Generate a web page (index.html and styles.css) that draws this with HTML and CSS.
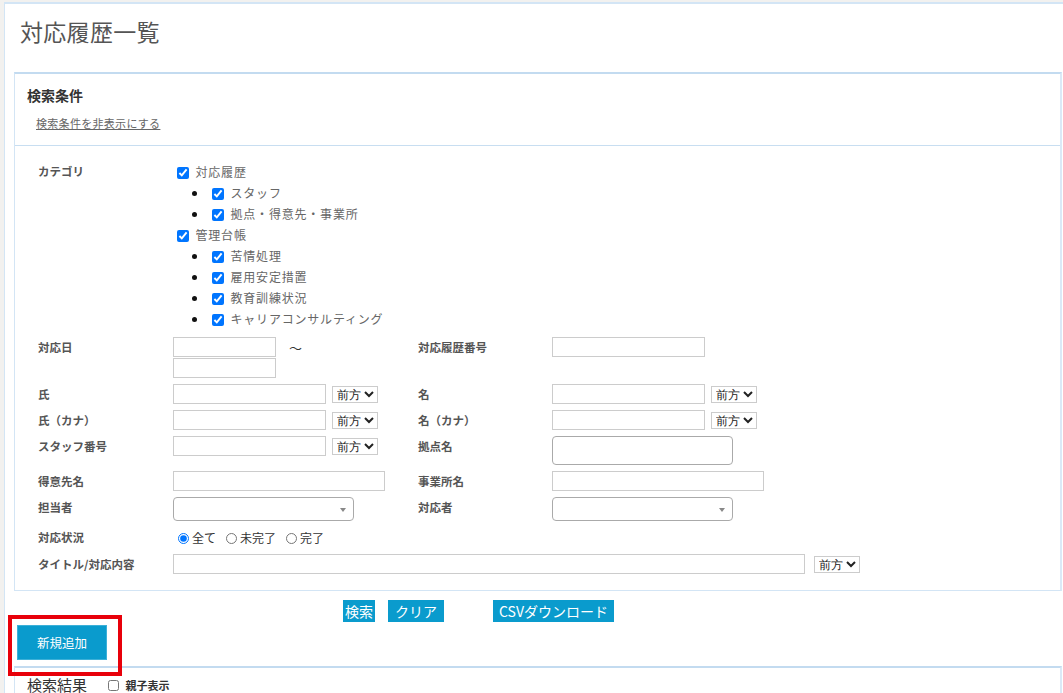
FILE: index.html
```html
<!doctype html>
<html>
  <head>
    <meta charset="utf-8">
    <title>対応履歴一覧</title>
    <link rel="stylesheet" href="styles.css">
  </head>
<body>
<div class="page">
  <h1 class="page_title">対応履歴一覧</h1>

  <!-- search conditions -->
  <div class="panel">
    <div class="panel_head">
      <h2>検索条件</h2>
      <a href="#" class="toggle_link">検索条件を非表示にする</a>
    </div>
    <div class="panel_body">
      <div class="form_grid">
        <div class="lbl">カテゴリ</div>
        <div class="span3">
          <ul class="cat_list">
            <li><label><input type="checkbox" checked> 対応履歴</label>
              <ul>
                <li><label><input type="checkbox" checked> スタッフ</label></li>
                <li><label><input type="checkbox" checked> 拠点・得意先・事業所</label></li>
              </ul>
            </li>
            <li><label><input type="checkbox" checked> 管理台帳</label>
              <ul>
                <li><label><input type="checkbox" checked> 苦情処理</label></li>
                <li><label><input type="checkbox" checked> 雇用安定措置</label></li>
                <li><label><input type="checkbox" checked> 教育訓練状況</label></li>
                <li><label><input type="checkbox" checked> キャリアコンサルティング</label></li>
              </ul>
            </li>
          </ul>
        </div>

        <div class="lbl">対応日</div>
        <div class="cell cell_date">
          <div class="cell"><input type="text" class="txt w_date"><span class="tilde">〜</span></div>
          <input type="text" class="txt w_date date2">
        </div>
        <div class="lbl">対応履歴番号</div>
        <div class="cell"><input type="text" class="txt w_mid"></div>

        <div class="lbl">氏</div>
        <div class="cell"><input type="text" class="txt w_mid"><select class="match"><option>前方</option></select></div>
        <div class="lbl">名</div>
        <div class="cell"><input type="text" class="txt w_mid"><select class="match"><option>前方</option></select></div>

        <div class="lbl">氏（カナ）</div>
        <div class="cell"><input type="text" class="txt w_mid"><select class="match"><option>前方</option></select></div>
        <div class="lbl">名（カナ）</div>
        <div class="cell"><input type="text" class="txt w_mid"><select class="match"><option>前方</option></select></div>

        <div class="lbl">スタッフ番号</div>
        <div class="cell"><input type="text" class="txt w_mid"><select class="match"><option>前方</option></select></div>
        <div class="lbl">拠点名</div>
        <div class="cell"><div class="multi_box"></div></div>

        <div class="lbl">得意先名</div>
        <div class="cell"><input type="text" class="txt w_long"></div>
        <div class="lbl">事業所名</div>
        <div class="cell"><input type="text" class="txt w_long"></div>

        <div class="lbl">担当者</div>
        <div class="cell"><div class="combo"><span class="combo_arrow"></span></div></div>
        <div class="lbl">対応者</div>
        <div class="cell"><div class="combo"><span class="combo_arrow"></span></div></div>

        <div class="lbl">対応状況</div>
        <div class="cell span3 radios">
          <label><input type="radio" name="status" checked>全て</label>
          <label><input type="radio" name="status">未完了</label>
          <label><input type="radio" name="status">完了</label>
        </div>

        <div class="lbl">タイトル/対応内容</div>
        <div class="cell span3"><input type="text" class="txt w_title"><select class="match match_title"><option>前方</option></select></div>
      </div>
    </div>
  </div>

  <div class="btn_row">
    <button class="btn btn_search">検索</button>
    <button class="btn btn_clear">クリア</button>
    <button class="btn btn_csv">CSVダウンロード</button>
  </div>

  <div class="add_wrap">
    <button class="btn_add">新規追加</button>
    <span class="mark"></span>
  </div>

  <!-- results -->
  <div class="panel result_panel">
    <div class="result_head">
      <h2>検索結果</h2>
      <label class="tree_opt"><input type="checkbox"> 親子表示</label>
    </div>
  </div>
</div>
</body>
</html>
```

FILE: styles.css
```css
html, body {
  margin: 0;
  background: #f2f1ef;
  font-family: "Noto Sans CJK JP", "Liberation Sans", sans-serif;
  color: #555;
  overflow: hidden;
}

.page {
  margin: 2px 0 0 4px;
  width: 1048px;
  padding: 0 9px;
  border-top: 2px solid #d3e5f5;
  border-left: 1px solid #d3e5f5;
  background: #ffffff;
  height: 720px;
}

.page_title {
  margin: 0;
  padding: 12px 6px 0;
  font-size: 23px;
  line-height: 30px;
  font-weight: normal;
  letter-spacing: 0.3px;
  color: #555;
}

.panel {
  margin-top: 26px;
  border-top: 2px solid #c3dbf0;
  border-left: 1px solid #d3e5f5;
  border-right: 2px solid #dbe9f7;
  border-bottom: 1px solid #d3e5f5;
}

.panel_head {
  padding: 11px 12px 12px 12px;
  border-bottom: 1px solid #c8def1;
}

.panel_head h2 {
  margin: 0;
  font-size: 14px;
  line-height: 20px;
  color: #333;
}

.toggle_link {
  display: inline-block;
  margin: 10px 0 0 9px;
  font-size: 11px;
  line-height: 16px;
  color: #666;
  letter-spacing: 0.3px;
}

.panel_body {
  padding: 15px 0 16px 23px;
}

.form_grid {
  display: grid;
  grid-template-columns: 135px 245px 134px 1fr;
  row-gap: 6px;
  align-items: start;
}

.lbl {
  font-size: 11.5px;
  font-weight: bold;
  line-height: 20px;
  color: #555;
}

.cell {
  display: flex;
  align-items: center;
  min-height: 20px;
  font-size: 12px;
}

.cell_date {
  flex-direction: column;
  align-items: flex-start;
}

.span3 { grid-column: 2 / 5; }

.cat_list,
.cat_list ul {
  list-style: none;
  margin: 0;
  padding: 0;
}

.cat_list {
  padding-bottom: 2px;
}

.cat_list ul {
  list-style: disc;
  padding-left: 35px;
}

.cat_list li {
  font-size: 12px;
  line-height: 21px;
  color: #666;
  letter-spacing: 0.8px;
}

.cat_list li::marker { color: #111; }

.cat_list input {
  width: 12px;
  height: 12px;
  vertical-align: -2px;
}

.txt {
  box-sizing: border-box;
  height: 20px;
  margin: 0;
  padding: 0 3px;
  border: 1px solid #cccccc;
  font-size: 12px;
}

.w_date { width: 103px; }
.date2 { margin-top: 1px; }
.w_mid { width: 153px; }
.w_long { width: 212px; }
.w_title { width: 632px; }

.tilde {
  margin-left: 13px;
  color: #333;
  font-size: 13px;
}

.match {
  box-sizing: border-box;
  width: 46px;
  height: 17px;
  margin: 0 0 0 6px;
  padding: 0;
  border: 1px solid #cccccc;
  border-radius: 0;
  background: #fff;
  color: #222;
  font-size: 12px;
}

.match_title { margin-left: 9px; }

.multi_box {
  box-sizing: border-box;
  width: 181px;
  height: 29px;
  border: 1px solid #aaaaaa;
  border-radius: 4px;
}

.combo {
  position: relative;
  box-sizing: border-box;
  width: 181px;
  height: 24px;
  border: 1px solid #aaaaaa;
  border-radius: 4px;
}

/* small triangle of the dropdown */
.combo_arrow {
  position: absolute;
  right: 7px;
  top: 10px;
  border-top: 4px solid #888;
  border-left: 3px solid transparent;
  border-right: 3px solid transparent;
}

.radios {
  height: 21px;
  color: #333;
}

.radios label {
  display: flex;
  align-items: center;
  height: 21px;
  margin-right: 5px;
}

.radios input {
  width: 11px;
  height: 11px;
  margin: 2px 3px 0 5px;
}

.btn_row {
  display: flex;
  margin-top: 9px;
  padding-left: 329px;
}

.btn {
  height: 22px;
  padding: 0 2px;
  border: 0;
  background: #0a9bcd;
  color: #ffffff;
  font-family: "Noto Sans CJK JP", "Liberation Sans", sans-serif;
  font-size: 14px;
  line-height: 22px;
}

.btn_clear { margin-left: 13px; padding: 0 7px; }
.btn_csv { margin-left: 49px; padding: 0 6px; }

.add_wrap {
  position: relative;
  margin: 3px 0 0 3px;
  width: 90px;
  height: 35px;
}

.btn_add {
  width: 90px;
  height: 35px;
  border: 1px solid #3cb0d8;
  background: #0a9bcd;
  color: #ffffff;
  font-family: "Noto Sans CJK JP", "Liberation Sans", sans-serif;
  font-size: 12.5px;
}

/* red highlight frame */
.mark {
  position: absolute;
  left: -9px;
  top: -10px;
  width: 106px;
  height: 53px;
  border: 4px solid #e8000a;
}

.result_panel {
  margin-top: 6px;
  border-bottom: 0;
  height: 40px;
}

.result_head {
  display: flex;
  align-items: center;
  padding: 6px 12px 0;
}

.result_head h2 {
  margin: 0;
  font-size: 15px;
  line-height: 22px;
  font-weight: normal;
  color: #333;
}

.tree_opt {
  margin-left: 21px;
  font-size: 11px;
  font-weight: bold;
  color: #333;
}

.tree_opt input {
  width: 11px;
  height: 11px;
  margin: 0 4px 0 0;
  vertical-align: -1px;
}
```
